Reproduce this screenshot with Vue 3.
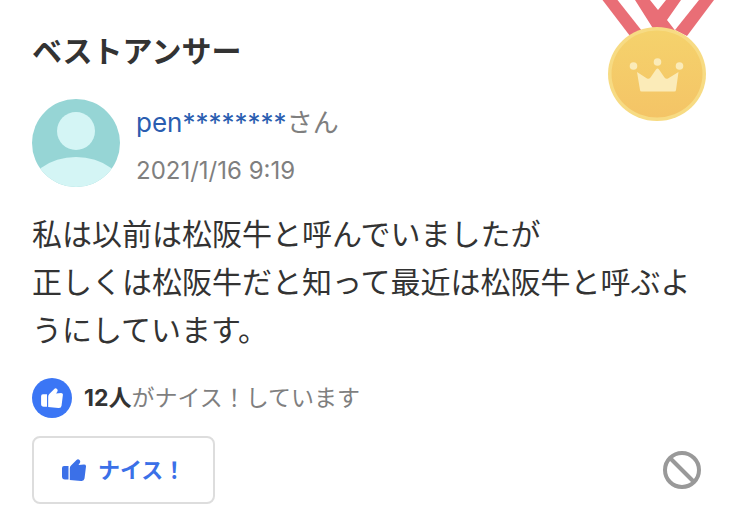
<script setup>
import { ref } from 'vue'

const count = ref(12)
const liked = ref(false)

function toggleNice() {
  liked.value = !liked.value
  count.value += liked.value ? 1 : -1
}
</script>

<template>
  <article class="answer">
    <svg class="medal" viewBox="0 0 120 124" aria-hidden="true">
      <defs>
        <linearGradient id="medal-gold" x1="0" y1="0" x2="0" y2="1">
          <stop offset="0" stop-color="#f5d26c" />
          <stop offset="1" stop-color="#f4c466" />
        </linearGradient>
      </defs>
      <g fill="#e96e76">
        <path d="M35 0H50L58 10L66 0H81L67 20L75.500 31L70 36L54 30Z" />
        <path d="M99 0H114L87 36L75 30Z" />
        <path d="M2.500 0H17.500L42 31L30 36Z" />
      </g>
      <ellipse cx="57" cy="74" rx="49" ry="47" fill="#f7db83" />
      <ellipse cx="57" cy="74" rx="45.500" ry="43.500" fill="url(#medal-gold)" />
      <g fill="#fbebb8">
        <circle cx="33.500" cy="66" r="3.800" />
        <circle cx="57.500" cy="62" r="3.800" />
        <circle cx="79.500" cy="66" r="3.800" />
        <path d="M37 72L47 78.500Q49 79.500 50.500 77.500L56 69.500Q57.500 67.500 59 69.500L64.500 77.500Q66 79.500 68 78.500L78.500 72L76 90Q75.800 91.500 74.500 91.500H41.500Q40.200 91.500 40 90Z" />
      </g>
    </svg>

    <h2 class="title">ベストアンサー</h2>

    <header class="author">
      <svg class="avatar" viewBox="0 0 88 88" aria-hidden="true">
        <defs>
          <clipPath id="avatar-circle"><circle cx="44" cy="44" r="44" /></clipPath>
        </defs>
        <g clip-path="url(#avatar-circle)">
          <rect width="88" height="88" fill="#96d5d5" />
          <circle cx="44" cy="32" r="19" fill="#d4f5f5" />
          <ellipse cx="44" cy="95" rx="49" ry="37" fill="#d4f5f5" />
        </g>
      </svg>
      <div class="meta">
        <p class="name"><a href="#">pen********</a>さん</p>
        <time class="date" datetime="2021-01-16T09:19">2021/1/16 9:19</time>
      </div>
    </header>

    <p class="body">私は以前は松阪牛と呼んでいましたが<br />正しくは松阪牛だと知って最近は松阪牛と呼ぶようにしています。</p>

    <p class="reactions">
      <span class="badge">
        <svg class="thumb small" viewBox="0 0 24 22" aria-hidden="true">
          <path d="M2 7H6.500V20.500H3Q0 20.500 0 17.500V9Q0 7 2 7ZM7.800 9.500Q7.800 7.500 9 6.500L14.500 1Q16 -0.300 17.500 1Q18.800 2.200 17.800 4L16.500 6L22 5.500Q24.200 5.500 24 7.500L22.500 19.500Q22 22.200 19 22L7.800 21Z" />
        </svg>
      </span>
      <span><strong>{{ count }}人</strong>がナイス！しています</span>
    </p>

    <footer class="actions">
      <button class="nice" type="button" :aria-pressed="liked" @click="toggleNice">
        <svg class="thumb" viewBox="0 0 24 22" aria-hidden="true">
          <path d="M2 7H6.500V20.500H3Q0 20.500 0 17.500V9Q0 7 2 7ZM7.800 9.500Q7.800 7.500 9 6.500L14.500 1Q16 -0.300 17.500 1Q18.800 2.200 17.800 4L16.500 6L22 5.500Q24.200 5.500 24 7.500L22.500 19.500Q22 22.200 19 22L7.800 21Z" />
        </svg>
        ナイス！
      </button>
      <button class="report" type="button" aria-label="違反報告">
        <svg viewBox="0 0 40 40" aria-hidden="true">
          <circle cx="20" cy="20" r="17" />
          <path d="M8 8L32 32" />
        </svg>
      </button>
    </footer>
  </article>
</template>

<style>
body {
  margin: 0;
  background: #fff;
}
</style>

<style scoped>
.answer {
  position: relative;
  padding: 31px 32px 20px;
  overflow: hidden;
  color: #333;
  font-family: Inter, "Noto Sans CJK JP", sans-serif;
}

.medal {
  position: absolute;
  top: 0;
  right: 30px;
  width: 120px;
  height: 124px;
}

.title {
  margin: 0;
  font-size: 30px;
  font-weight: 700;
  line-height: 40px;
}

.author {
  display: flex;
  align-items: flex-start;
  gap: 16px;
  margin-top: 28px;
}

.avatar {
  flex: none;
  width: 88px;
  height: 88px;
}

.meta {
  display: flex;
  flex-direction: column;
  color: #7f7f7f;
}

.name {
  margin: 0;
  font-size: 26px;
  line-height: 48px;
}

.name a {
  color: #2a5db0;
  text-decoration: none;
}

.date {
  font-size: 24px;
  line-height: 48px;
}

.body {
  margin: 15px 0 0;
  font-size: 30px;
  line-height: 48px;
}

.reactions {
  display: flex;
  align-items: center;
  gap: 12px;
  margin: 24px 0 0;
  color: #7f7f7f;
  font-size: 23px;
  line-height: 40px;
}

.reactions strong {
  color: #333;
}

.badge {
  display: grid;
  place-items: center;
  width: 40px;
  height: 40px;
  border-radius: 50%;
  background: #3b76f5;
  color: #fff;
}

.thumb {
  width: 24px;
  height: 22px;
  fill: currentColor;
}

.thumb.small {
  width: 22px;
  height: 20px;
}

.actions {
  display: flex;
  align-items: center;
  justify-content: space-between;
  margin-top: 18px;
}

.nice {
  display: flex;
  align-items: center;
  gap: 12px;
  padding: 12px 28px;
  border: 2px solid #ddd;
  border-radius: 8px;
  background: #fff;
  color: #3b70e8;
  font: 700 22px/40px Inter, "Noto Sans CJK JP", sans-serif;
  cursor: pointer;
}

.report {
  padding: 0;
  border: 0;
  margin-right: 16px;
  background: none;
  cursor: pointer;
}

.report svg {
  display: block;
  width: 40px;
  height: 40px;
  fill: none;
  stroke: #999;
  stroke-width: 4;
}
</style>
